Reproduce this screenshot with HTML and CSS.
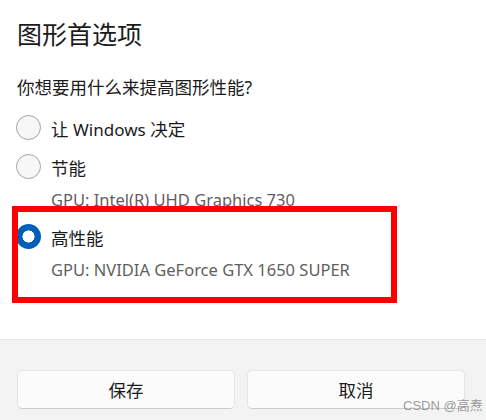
FILE: index.html
```html
<!DOCTYPE html>
<html lang="zh-CN">
<head>
<meta charset="utf-8">
<title>图形首选项</title>
<link rel="stylesheet" href="styles.css">
</head>
<body>
<div class="dialog">
  <div class="content">
    <h1 class="title">图形首选项</h1>
    <p class="question">你想要用什么来提高图形性能?</p>
    <div class="options">
      <div class="option">
        <span class="radio"></span>
        <div class="text">
          <div class="label">让 <span class="latin">Windows</span> 决定</div>
        </div>
      </div>
      <div class="option">
        <span class="radio"></span>
        <div class="text">
          <div class="label">节能</div>
          <div class="gpu">GPU: Intel(R) UHD Graphics 730</div>
        </div>
      </div>
      <div class="option">
        <span class="radio radio-checked"></span>
        <div class="text">
          <div class="label">高性能</div>
          <div class="gpu">GPU: NVIDIA GeForce GTX 1650 SUPER</div>
        </div>
      </div>
    </div>
  </div>
  <div class="footer">
    <button class="btn">保存</button>
    <button class="btn">取消</button>
  </div>
  <div class="highlight"></div>
  <div class="watermark">CSDN @高焘</div>
</div>
</body>
</html>
```
FILE: styles.css
```css
* { box-sizing: border-box; }
html, body { margin: 0; padding: 0; }
body {
  width: 486px;
  height: 420px;
  overflow: hidden;
  background: #ffffff;
  font-family: "Noto Sans", "Noto Sans CJK SC", sans-serif;
  color: #1b1b1b;
}
.dialog {
  position: relative;
  width: 486px;
  height: 420px;
  display: flex;
  flex-direction: column;
}
.content {
  height: 339px;
  padding: 17px 17px 0 17px;
}
.title {
  margin: 0;
  font-size: 25px;
  font-weight: 400;
  line-height: 34px;
}
.question {
  margin: 24px 0 0 0;
  font-size: 17.5px;
  line-height: 24px;
}
.options {
  margin-top: 18px;
  display: flex;
  flex-direction: column;
  gap: 14px;
}
.option {
  display: flex;
  align-items: flex-start;
  gap: 10px;
  margin-left: -1px;
}
.radio {
  width: 25px;
  height: 25px;
  margin-top: -2px;
  border-radius: 50%;
  border: 1.5px solid #a3a3a3;
  background: #f7f7f7;
  flex: none;
}
.radio-checked {
  border: none;
  background: radial-gradient(circle, #ffffff 0 5.8px, #005fb8 6.3px);
}
.text {
  display: flex;
  flex-direction: column;
  gap: 8px;
}
.label {
  font-size: 17.5px;
  line-height: 24px;
}
.latin { font-size: 17px; }
.gpu {
  font-size: 16.5px;
  line-height: 24px;
  color: #5f5f5f;
}
.footer {
  flex: 1;
  background: #f3f3f3;
  border-top: 1px solid #e5e5e5;
  padding: 30px 21px 0 17px;
  display: flex;
  gap: 12px;
}
.btn {
  flex: 1;
  height: 39px;
  border: 1px solid #e5e5e5;
  border-bottom-color: #cccccc;
  border-radius: 5px;
  background: #fbfbfb;
  font-family: "Noto Sans", "Noto Sans CJK SC", sans-serif;
  font-size: 17.5px;
  color: #1b1b1b;
  padding: 0;
}
.highlight {
  position: absolute;
  left: 12px;
  top: 206px;
  width: 385px;
  height: 97px;
  border: 6px solid #ff0000;
}
.watermark {
  position: absolute;
  left: 403px;
  top: 398px;
  font-family: "Liberation Sans", "Noto Sans CJK SC", sans-serif;
  font-size: 13px;
  line-height: 16px;
  color: #9a9a9a;
}
```
